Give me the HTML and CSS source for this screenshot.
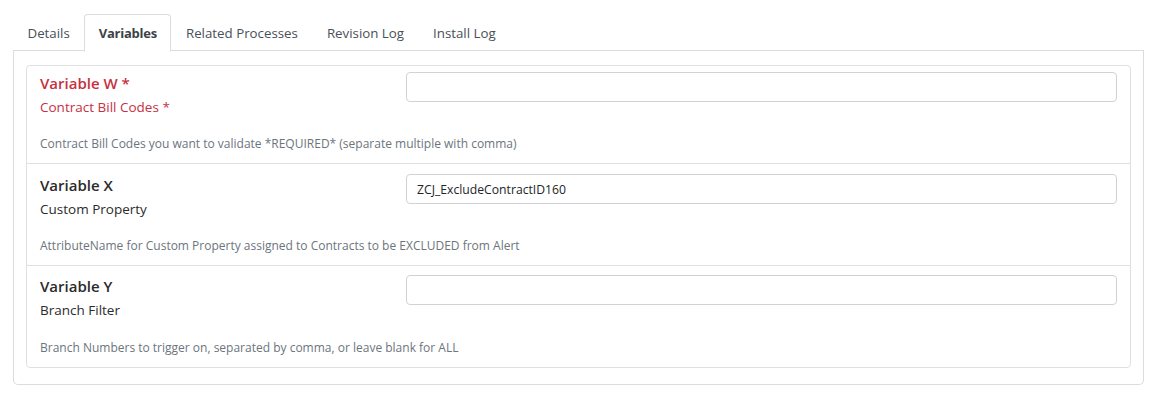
FILE: index.html
```html
<!DOCTYPE html>
<html>
<head>
<meta charset="utf-8">
<link rel="stylesheet" href="styles.css">
</head>
<body>
<div class="page">
  <ul class="tabs">
    <li class="tab">Details</li>
    <li class="tab active">Variables</li>
    <li class="tab">Related Processes</li>
    <li class="tab">Revision Log</li>
    <li class="tab">Install Log</li>
  </ul>
  <div class="panel">
    <div class="list">
      <div class="item">
        <div class="row">
          <div class="labels">
            <div class="title required">Variable W *</div>
            <div class="sub required">Contract Bill Codes *</div>
          </div>
          <div class="field"><input class="input" type="text" value=""></div>
        </div>
        <div class="desc">Contract Bill Codes you want to validate *REQUIRED* (separate multiple with comma)</div>
      </div>
      <div class="item">
        <div class="row">
          <div class="labels">
            <div class="title">Variable X</div>
            <div class="sub">Custom Property</div>
          </div>
          <div class="field"><input class="input" type="text" value="ZCJ_ExcludeContractID160"></div>
        </div>
        <div class="desc">AttributeName for Custom Property assigned to Contracts to be EXCLUDED from Alert</div>
      </div>
      <div class="item">
        <div class="row">
          <div class="labels">
            <div class="title">Variable Y</div>
            <div class="sub">Branch Filter</div>
          </div>
          <div class="field"><input class="input" type="text" value=""></div>
        </div>
        <div class="desc">Branch Numbers to trigger on, separated by comma, or leave blank for ALL</div>
      </div>
    </div>
  </div>
</div>
</body>
</html>
```

FILE: styles.css
```css
* { box-sizing: border-box; }
html, body { margin: 0; padding: 0; background: #fff; }
body {
  font-family: "Open Sans", "Noto Sans", "Liberation Sans", sans-serif;
  color: #212529;
}
.page {
  padding: 14px 8px 0 13px;
  width: 1152px;
}
.tabs {
  list-style: none;
  margin: 0;
  padding: 0;
  display: flex;
  height: 37px;
  border-bottom: 1px solid #dcdcdc;
}
.tab {
  padding: 0 13.5px;
  height: 37px;
  line-height: 36px;
  font-size: 13.3px;
  color: #495057;
  border: 1px solid transparent;
  border-top-left-radius: 4px;
  border-top-right-radius: 4px;
}
.tab.active {
  color: #3d4248;
  font-weight: 700;
  font-size: 13px;
  letter-spacing: -0.25px;
  background: #fff;
  border-color: #dcdcdc #dcdcdc #fff;
  height: 38px;
}
.panel {
  width: 1131px;
  border: 1px solid #dcdcdc;
  border-top: none;
  border-radius: 0 0 5px 5px;
  padding: 14px 12px 16px 12px;
}
.list {
  border: 1px solid #e0e0e0;
  border-radius: 4px;
}
.item {
  display: flex;
  flex-direction: column;
  padding: 9px 13px 11px 13px;
  height: 102px;
  border-top: 1px solid #e0e0e0;
}
.item:first-child { border-top: none; height: 97px; padding-top: 5px; }
.item:last-child { padding-top: 8px; }
.row {
  display: grid;
  grid-template-columns: 366px 1fr;
}
.labels { display: flex; flex-direction: column; }
.title {
  font-size: 15px;
  font-weight: 600;
  line-height: 20px;
  margin-top: 2px;
  color: #2b2b2b;
}
.sub {
  font-size: 13.5px;
  line-height: 18px;
  margin-top: 5px;
  color: #2b2b2b;
}
.required { color: #c6303f; }
.field { padding-top: 1px; }
.input {
  display: block;
  width: 100%;
  height: 30px;
  border: 1px solid #cfd3d7;
  border-radius: 4px;
  padding: 0 10px;
  font-family: inherit;
  font-size: 12.2px;
  color: #212529;
  background: #fff;
  outline: none;
}
.desc {
  margin-top: auto;
  font-size: 12px;
  line-height: 16px;
  color: #6c757d;
}
```
